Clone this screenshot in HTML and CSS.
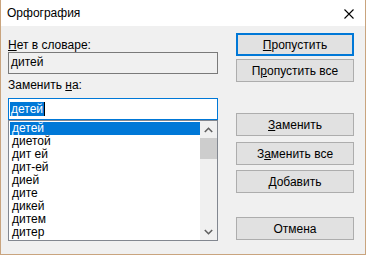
FILE: index.html
```html
<!DOCTYPE html>
<html lang="ru">
<head>
<meta charset="utf-8">
<title>Орфография</title>
<link rel="stylesheet" href="styles.css">
</head>
<body>
<div class="window">
  <div class="titlebar">
    <span class="title">Орфография</span>
    <svg class="close" width="10" height="10" viewBox="0 0 10 10"><path d="M0.5 0.5 L9.5 9.5 M9.5 0.5 L0.5 9.5" stroke="#000" stroke-width="1.1" fill="none"/></svg>
  </div>
  <div class="content">
    <div class="left">
      <div class="label lbl1"><u>Н</u>ет в словаре:</div>
      <div class="field ro">дитей</div>
      <div class="label lbl2">Заменить <u>н</u>а:</div>
      <div class="field input"><span class="sel">детей</span><span class="caret"></span></div>
      <div class="list">
        <div class="items">
          <div class="item active">детей</div>
          <div class="item">диетой</div>
          <div class="item">дит ей</div>
          <div class="item">дит-ей</div>
          <div class="item">дией</div>
          <div class="item">дите</div>
          <div class="item">дикей</div>
          <div class="item">дитем</div>
          <div class="item">дитер</div>
        </div>
        <div class="scrollbar">
          <div class="arrow"><svg width="9" height="6" viewBox="0 0 9 6"><path d="M0.8 5 L4.5 1.3 L8.2 5" stroke="#606060" stroke-width="1.6" fill="none"/></svg></div>
          <div class="thumb"></div>
          <div class="track"></div>
          <div class="arrow"><svg width="9" height="6" viewBox="0 0 9 6"><path d="M0.8 1 L4.5 4.7 L8.2 1" stroke="#606060" stroke-width="1.6" fill="none"/></svg></div>
        </div>
      </div>
    </div>
    <div class="right">
      <div class="btn focus b1"><u>П</u>ропустить</div>
      <div class="btn b2">П<u>р</u>опустить все</div>
      <div class="btn b3"><u>З</u>аменить</div>
      <div class="btn b4">З<u>а</u>менить все</div>
      <div class="btn b5"><u>Д</u>обавить</div>
      <div class="btn b6">Отмена</div>
    </div>
  </div>
</div>
</body>
</html>
```

FILE: styles.css
```css
html, body {
  margin: 0;
  padding: 0;
}
body {
  font-family: "Liberation Sans", Arial, sans-serif;
  font-size: 12px;
  color: #000;
  background: #f0f0f0;
}
.window {
  width: 364px;
  height: 254px;
  border: 1px solid #c9a47e;
  border-top: none;
  background: #f0f0f0;
  display: flex;
  flex-direction: column;
}
.titlebar {
  height: 26px;
  background: #fff;
  display: flex;
  align-items: center;
  justify-content: space-between;
  padding: 0 11px 0 6px;
}
.title {
  font-size: 12px;
  line-height: 14px;
  margin-top: 0;
}
.close {
  display: block;
  margin-top: 1px;
}
.content {
  flex: 1;
  display: flex;
  padding-left: 7px;
}
.left {
  width: 210px;
  display: flex;
  flex-direction: column;
  padding-top: 12px;
}
.label {
  line-height: 14px;
  height: 14px;
}
.lbl2 {
  margin-top: 4px;
}
.field {
  height: 22px;
  box-sizing: border-box;
  line-height: 18px;
  padding-left: 2px;
}
.ro {
  border: 1px solid #7a7a7a;
  background: #f0f0f0;
}
.input {
  margin-top: 6px;
  border: 1px solid #0078d7;
  background: #fff;
  display: flex;
  align-items: center;
  padding-left: 1px;
}
.sel {
  background: #0078d7;
  color: #fff;
  line-height: 14px;
  padding: 0 1px;
}
.caret {
  width: 1px;
  height: 14px;
  background: #000;
}
.list {
  height: 121px;
  box-sizing: border-box;
  border: 1px solid #828790;
  background: #fff;
  display: flex;
}
.items {
  flex: 1;
  padding: 1px 0 0 1px;
}
.item {
  height: 13px;
  line-height: 13px;
  padding-left: 2px;
}
.item.active {
  background: #0078d7;
  color: #fff;
}
.scrollbar {
  width: 17px;
  background: #f0f0f0;
  display: flex;
  flex-direction: column;
}
.arrow {
  height: 17px;
  display: flex;
  align-items: center;
  justify-content: center;
}
.thumb {
  height: 21px;
  background: #cdcdcd;
}
.track {
  flex: 1;
}
.right {
  margin-left: 18px;
  width: 118px;
  display: flex;
  flex-direction: column;
}
.btn {
  height: 23px;
  box-sizing: border-box;
  border: 1px solid #adadad;
  background: #e1e1e1;
  display: flex;
  align-items: center;
  justify-content: center;
}
.btn.focus {
  border: 2px solid #0078d7;
}
.b1 { margin-top: 7px; }
.b2 { margin-top: 3px; }
.b3 { margin-top: 31px; }
.b4 { margin-top: 6px; }
.b5 { margin-top: 5px; }
.b6 { margin-top: 24px; }
u {
  text-decoration: underline;
  text-underline-offset: 1px;
}
```
